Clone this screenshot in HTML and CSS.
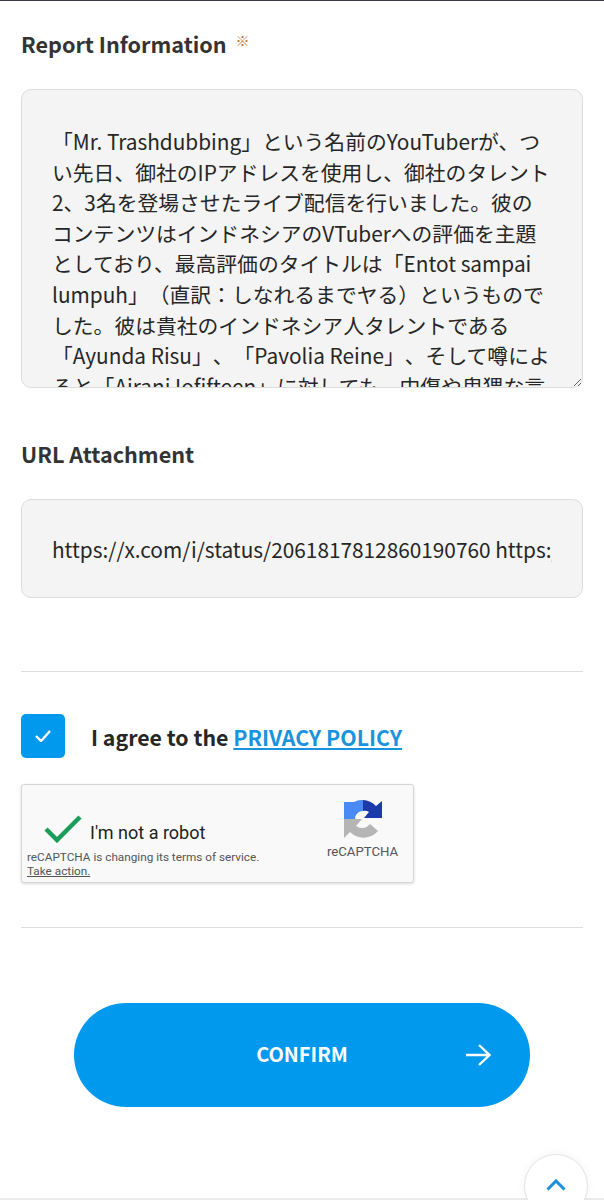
FILE: index.html
```html
<!DOCTYPE html>
<html>
<head>
    <meta charset="UTF-8">
    <title>Report Form</title>
    <link rel="stylesheet" href="styles.css">
</head>
<body>
    <div class="form">
        <div class="field-label first">
            Report Information
            <span class="required">※</span>
        </div>
        <textarea class="report-text" readonly>「Mr. Trashdubbing」という名前のYouTuberが、つい先日、御社のIPアドレスを使用し、御社のタレント2、3名を登場させたライブ配信を行いました。彼のコンテンツはインドネシアのVTuberへの評価を主題としており、最高評価のタイトルは「Entot sampai lumpuh」（直訳：しなれるまでヤる）というものでした。彼は貴社のインドネシア人タレントである「Ayunda Risu」、「Pavolia Reine」、そして噂によると「Airani Iofifteen」に対しても、中傷や卑猥な言葉を使用しました。</textarea>

        <div class="field-label second">URL Attachment</div>
        <input class="url-input" type="text" readonly value="https://x.com/i/status/2061817812860190760 https://x.com/i/status/2061817812860190761">

        <div class="divider divider-top"></div>

        <label class="agree">
            <span class="checkbox">
                <svg width="16" height="12" viewBox="0 0 16 12"><path d="M1 6 L6 11 L15 1" fill="none" stroke="#fff" stroke-width="2.4"/></svg>
            </span>
            <span class="agree-text">I agree to the <a href="#">PRIVACY POLICY</a></span>
        </label>

        <div class="recaptcha">
            <div class="recaptcha-main">
                <div class="recaptcha-check">
                    <svg width="38" height="28" viewBox="0 0 38 28"><path d="M2 14 L13 25 L36 2" fill="none" stroke="#1a9c5b" stroke-width="4.5"/></svg>
                    <span class="recaptcha-label">I'm not a robot</span>
                </div>
                <div class="recaptcha-notice">
                    reCAPTCHA is changing its terms of service.<br>
                    <u>Take action.</u>
                </div>
            </div>
            <div class="recaptcha-brand">
                <svg width="40" height="40" viewBox="0 0 40 40">
                    <path d="M20 1 A18 18 0 0 0 1 20 L12 20 A8 8 0 0 1 20 12 Z" fill="#4a8af4"/>
                    <path d="M1 3 L16 3 L1 19 Z" fill="#4a8af4"/>
                    <path d="M20 1 A19 19 0 0 1 33 7 L39 2 L39 19 L21 19 L26 13 A9 9 0 0 0 20 12 Z" fill="#1c3aa9"/>
                    <path d="M1 20 L1 39 L7 33 A19 19 0 0 0 35 32 L27 25 A10 10 0 0 1 13 27 L19 20 Z" fill="#b5b5b5"/>
                </svg>
                <span>reCAPTCHA</span>
            </div>
        </div>

        <div class="divider divider-bottom"></div>

        <button class="confirm">
            CONFIRM
            <svg class="confirm-arrow" width="26" height="22" viewBox="0 0 26 22"><path d="M1 11 H24 M14 1 L24.5 11 L14 21" fill="none" stroke="#fff" stroke-width="2.4"/></svg>
        </button>
    </div>

    <div class="bottom-line"></div>
    <div class="page-top">
        <svg width="20" height="12" viewBox="0 0 20 12"><path d="M1.5 10.5 L10 2 L18.5 10.5" fill="none" stroke="#1a8fdc" stroke-width="3"/></svg>
    </div>
</body>
</html>
```

FILE: styles.css
```css
:root {
    --blue: #0099ee;
    --text-color: #333;
    --border-color: #dcdcdc;
    --field-bg: #f4f4f4;
}

* {
    box-sizing: border-box;
    margin: 0;
    padding: 0;
}

html, body {
    height: 1200px;
    overflow: hidden;
}

body {
    position: relative;
    background: #fff;
    color: var(--text-color);
    font-family: "Noto Sans CJK JP", "Noto Sans", sans-serif;
    border-top: 1px solid #3a3a44;
}

.form {
    padding: 0 21px;
}

.field-label {
    font-size: 21.6px;
    font-weight: 700;
    line-height: 32px;
}

.field-label.first {
    margin-top: 27px;
}

.field-label.second {
    margin-top: 50px;
}

.required {
    color: #c4702f;
    font-size: 14px;
    font-weight: 400;
    line-height: 1;
    vertical-align: 7px;
    margin-left: 4px;
}

.report-text,
.url-input {
    display: block;
    width: 100%;
    background: var(--field-bg);
    border: 1px solid var(--border-color);
    border-radius: 10px;
    color: #262626;
    font-family: inherit;
    font-size: 20.8px;
    outline: none;
    text-spacing-trim: space-all;
}

.report-text {
    height: 299px;
    margin-top: 29px;
    padding: 36px 30px 0;
    line-height: 30.6px;
    overflow: hidden;
    resize: vertical;
}

.url-input {
    height: 99px;
    margin-top: 29px;
    padding: 0 30px;
}

.divider {
    height: 1px;
    background: #dedede;
}

.divider-top {
    margin-top: 73px;
}

.divider-bottom {
    margin-top: 44px;
}

.agree {
    display: flex;
    align-items: center;
    gap: 26px;
    margin-top: 42px;
}

.checkbox {
    display: flex;
    align-items: center;
    justify-content: center;
    width: 44px;
    height: 44px;
    background: var(--blue);
    border-radius: 5px;
}

.agree-text {
    font-size: 21.3px;
    font-weight: 700;
    color: #262626;
}

.agree-text a {
    color: #1a93de;
}

.recaptcha {
    display: flex;
    width: 393px;
    height: 99px;
    margin-top: 26px;
    background: #f9f9f9;
    border: 1px solid #d6d6d6;
    border-radius: 3px;
    box-shadow: 0 1px 3px rgba(0,0,0,0.15);
    font-family: Roboto, sans-serif;
}

.recaptcha-main {
    flex: 1;
    padding: 29px 0 0 5px;
}

.recaptcha-check {
    display: flex;
    align-items: center;
    gap: 8px;
    padding-left: 17px;
    font-size: 18px;
    color: #222;
}

.recaptcha-label {
    padding-top: 8px;
}

.recaptcha-notice {
    margin-top: 7px;
    font-size: 11.75px;
    line-height: 14px;
    color: #555;
}

.recaptcha-brand {
    display: flex;
    flex-direction: column;
    align-items: center;
    width: 96px;
    padding: 14px 5px 0 0;
    font-size: 13.2px;
    color: #555;
    gap: 5px;
}

.confirm {
    position: relative;
    display: block;
    width: 456px;
    height: 104px;
    margin: 75px auto 0;
    padding-bottom: 3px;
    background: var(--blue);
    border: none;
    border-radius: 52px;
    color: #fff;
    font-family: inherit;
    font-size: 20px;
    font-weight: 700;
}

.confirm-arrow {
    position: absolute;
    right: 39px;
    top: 41px;
}

.page-top {
    position: absolute;
    left: 524px;
    top: 1153px;
    width: 64px;
    height: 64px;
    padding-top: 24px;
    background: #fff;
    border: 1px solid #e4e4e4;
    border-radius: 50%;
    box-shadow: 0 0 10px rgba(0,0,0,0.05);
}

.page-top svg {
    display: block;
    margin: 0 auto;
}

.bottom-line {
    position: absolute;
    left: 0;
    right: 0;
    top: 1197px;
    height: 2px;
    background: #ececec;
}
```
